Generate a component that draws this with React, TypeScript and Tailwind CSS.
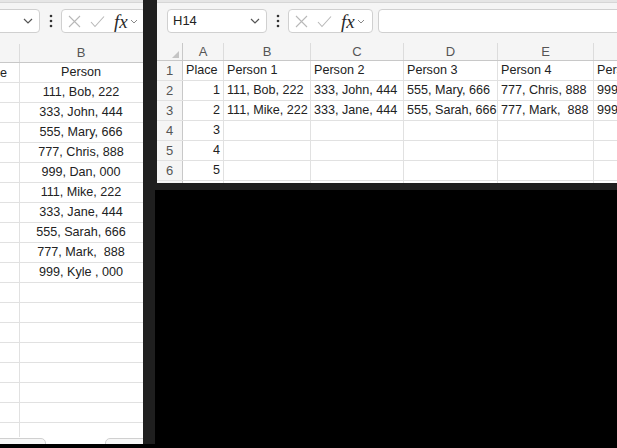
import React from 'react';

// two overlapping Excel windows on a black desktop

const cellText = 'text-[12.6px] text-[#222] whitespace-pre';

function Chevron({ className = '' }: { className?: string }) {
    return (
        <svg width="10" height="6" viewBox="0 0 10 6" className={className}>
            <polyline points="1,1 5,5 9,1" fill="none" stroke="#555" strokeWidth="1.2" />
        </svg>
    );
}

function SmallChevron() {
    return (
        <svg width="8" height="5" viewBox="0 0 8 5">
            <polyline points="1,1 4,4 7,1" fill="none" stroke="#888" strokeWidth="1" />
        </svg>
    );
}

function Dots() {
    return (
        <svg width="4" height="14" viewBox="0 0 4 14">
            <circle cx="2" cy="2" r="1.3" fill="#333" />
            <circle cx="2" cy="7" r="1.3" fill="#333" />
            <circle cx="2" cy="12" r="1.3" fill="#333" />
        </svg>
    );
}

// Name box + formula buttons + input, shared by both windows
function FormulaBar({ name, offset }: { name: string; offset: string }) {
    return (
        <div className="flex h-[43px] flex-col bg-[#f5f5f5]">
            <div className="h-[3px] border-b border-[#d6d6d6] bg-[#e6e6e6]" />
            <div className={`mt-[6px] flex h-[24px] items-center ${offset}`}>
                <div className="flex h-[24px] w-[100px] shrink-0 items-center justify-between rounded-[4px] border border-[#d0d0d0] bg-white pl-[5px] pr-[6px]">
                    <span className="text-[13px] text-[#222]">{name}</span>
                    <Chevron />
                </div>
                <div className="ml-[8px] flex w-[6px] shrink-0 justify-center">
                    <Dots />
                </div>
                <div className="ml-[7px] flex h-[24px] w-[85px] shrink-0 items-center rounded-[4px] border border-[#d0d0d0] bg-white pl-[6px]">
                    <svg width="13" height="13" viewBox="0 0 13 13">
                        <path d="M1 1 L12 12 M12 1 L1 12" stroke="#b8b8b8" strokeWidth="1.1" />
                    </svg>
                    <svg width="15" height="13" viewBox="0 0 15 13" className="ml-[9px]">
                        <polyline points="1,7 5,11.5 14,1.5" fill="none" stroke="#b8b8b8" strokeWidth="1.1" />
                    </svg>
                    <span className="ml-[9px] font-['Liberation_Serif',serif] text-[19px] italic leading-none text-[#2a2a2a]">fx</span>
                    <span className="ml-[2px]">
                        <SmallChevron />
                    </span>
                </div>
                <div className="ml-[5px] h-[24px] w-[300px] shrink-0 rounded-[4px] border border-[#d0d0d0] bg-white" />
            </div>
        </div>
    );
}

const leftData = [
    '111, Bob, 222',
    '333, John, 444',
    '555, Mary, 666',
    '777, Chris, 888',
    '999, Dan, 000',
    '111, Mike, 222',
    '333, Jane, 444',
    '555, Sarah, 666',
    '777, Mark,  888',
    '999, Kyle , 000',
];

function LeftWindow() {
    const rows = ['Person', ...leftData, ...Array(9).fill('')];
    return (
        <div className="absolute left-0 top-0 h-[444px] w-[155px] bg-[#1f1f1f]">
            <div className="flex h-full w-[143px] flex-col overflow-hidden bg-white">
                <FormulaBar name="" offset="-ml-[60px]" />
                <div className="h-[1px] bg-[#f5f5f5]" />
                {/* column header */}
                <div className="flex h-[19px] shrink-0 border-b border-[#c8c8c8] bg-[#f5f5f5]">
                    <div className="w-[20px] shrink-0 border-r border-[#dcdcdc]" />
                    <div className="flex w-[122px] shrink-0 items-center justify-center text-[13px] text-[#555]">B</div>
                </div>
                <div className="flex-1 overflow-hidden">
                    {rows.map((v, i) => (
                        <div key={i} className="flex h-[20px] border-b border-[#e1e1e1]">
                            <div className="relative w-[20px] shrink-0 overflow-hidden border-r border-[#e1e1e1]">
                                {i === 0 && <span className={`absolute right-[12px] top-[1px] ${cellText}`}>Place</span>}
                            </div>
                            <div className={`flex w-[122px] shrink-0 items-center justify-center ${cellText}`}>{v}</div>
                        </div>
                    ))}
                </div>
                {/* sheet tabs strip */}
                <div className="relative h-[7px] shrink-0 bg-white">
                    <div className="absolute left-[-10px] top-[1px] h-[10px] w-[56px] rounded-tr-[5px] border border-[#d0d0d0] bg-[#f7f7f7]" />
                    <div className="absolute left-[105px] top-[1px] h-[10px] w-[60px] rounded-tl-[5px] border border-[#d0d0d0] bg-[#f7f7f7]" />
                </div>
            </div>
        </div>
    );
}

const cols = [
    { name: 'A', w: 'w-[41px]' },
    { name: 'B', w: 'w-[87px]' },
    { name: 'C', w: 'w-[93px]' },
    { name: 'D', w: 'w-[94px]' },
    { name: 'E', w: 'w-[96px]' },
    { name: 'F', w: 'w-[60px]' },
];

const rightData: string[][] = [
    ['Place', 'Person 1', 'Person 2', 'Person 3', 'Person 4', 'Person 5'],
    ['1', '111, Bob, 222', '333, John, 444', '555, Mary, 666', '777, Chris, 888', '999, Dan, 000'],
    ['2', '111, Mike, 222', '333, Jane, 444', '555, Sarah, 666', '777, Mark,  888', '999, Kyle , 000'],
    ['3', '', '', '', '', ''],
    ['4', '', '', '', '', ''],
    ['5', '', '', '', '', ''],
    ['', '', '', '', '', ''],
];

function RightWindow() {
    return (
        <div className="absolute left-[155px] top-0 h-[190px] w-[462px] bg-[#1f1f1f] pl-[2px] pb-[7px]">
            <div className="h-[183px] overflow-hidden bg-white">
                <FormulaBar name="H14" offset="ml-[10px]" />
                {/* column header */}
                <div className="flex h-[18px] border-b border-[#c8c8c8] bg-[#f5f5f5]">
                    <div className="relative w-[26px] shrink-0 border-r border-[#c8c8c8]">
                        <svg width="7" height="7" viewBox="0 0 7 7" className="absolute bottom-[2px] right-[3px]">
                            <polygon points="7,0 7,7 0,7" fill="#c4c4c4" />
                        </svg>
                    </div>
                    {cols.map((c) => (
                        <div key={c.name} className={`${c.w} flex shrink-0 items-center justify-center border-r border-[#dcdcdc] text-[13px] text-[#555]`}>
                            {c.name}
                        </div>
                    ))}
                </div>
                {rightData.map((row, r) => (
                    <div key={r} className="flex h-[20px] border-b border-[#e1e1e1]">
                        <div className="flex w-[26px] shrink-0 items-center justify-center border-r border-[#c8c8c8] bg-[#f5f5f5] text-[13px] text-[#555]">
                            {r + 1}
                        </div>
                        {row.map((v, c) => {
                            const right = c === 0 && r > 0;
                            return (
                                <div
                                    key={c}
                                    className={`${cols[c].w} flex shrink-0 items-center border-r border-[#e1e1e1] pl-[3px] pr-[3px] ${
                                        right ? 'justify-end' : 'justify-start'
                                    } ${cellText}`}
                                >
                                    {v}
                                </div>
                            );
                        })}
                    </div>
                ))}
            </div>
        </div>
    );
}

export default function App() {
    return (
        <div className="relative h-[448px] w-[617px] overflow-hidden bg-black font-['Liberation_Sans',sans-serif]">
            <LeftWindow />
            <RightWindow />
        </div>
    );
}
